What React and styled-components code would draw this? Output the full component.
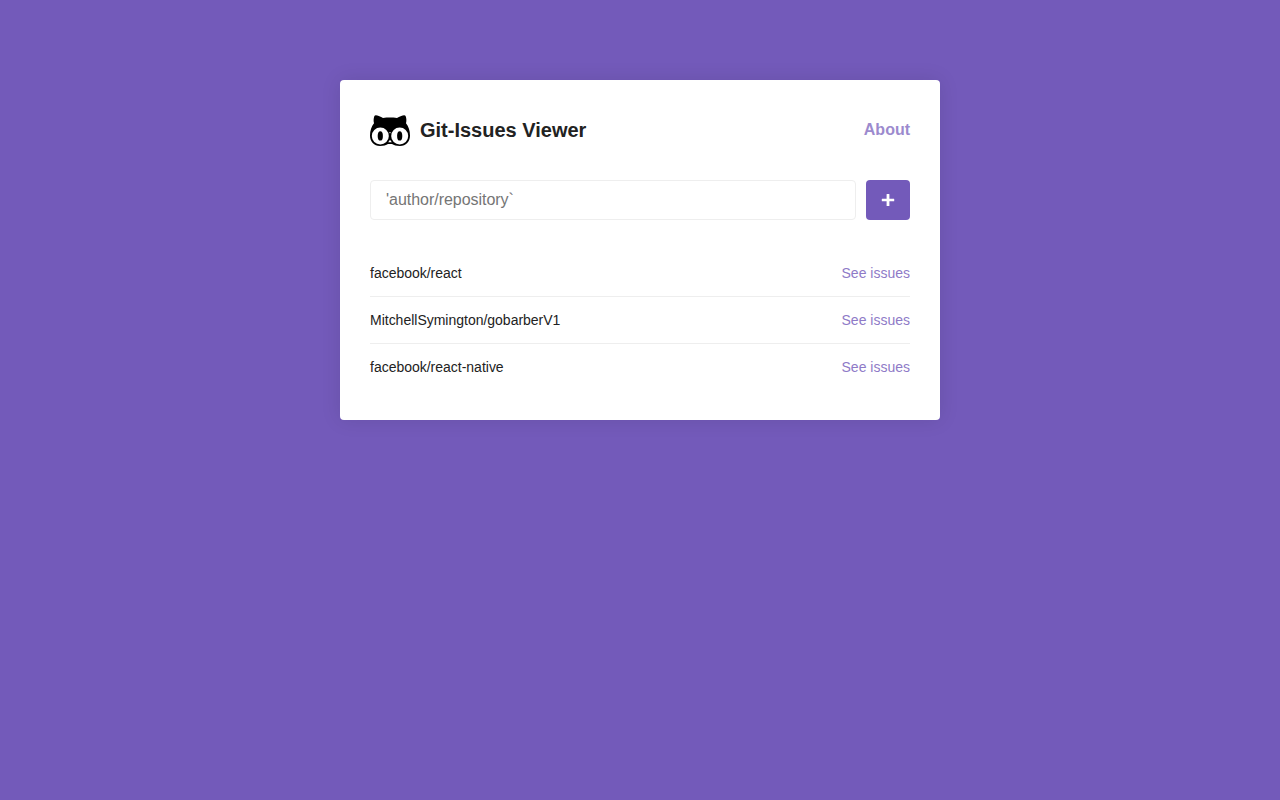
import React from "react";
import styled, { createGlobalStyle } from "styled-components";

const GlobalStyle = createGlobalStyle`
  * { margin: 0; padding: 0; box-sizing: border-box; }
  html, body, #root { min-height: 100%; }
  body {
    background: #735aba;
    -webkit-font-smoothing: antialiased;
  }
  body, input, button {
    color: #222;
    font-size: 14px;
    font-family: Arial, "Liberation Sans", Helvetica, sans-serif;
  }
`;

const Container = styled.main`
  width: 600px;
  margin: 80px auto;
  padding: 30px;
  background: #fff;
  border-radius: 4px;
  box-shadow: 0 0 20px rgba(0, 0, 0, 0.1);
`;

const Header = styled.header`
  display: flex;
  align-items: center;
  justify-content: space-between;
  height: 40px;
`;

const Title = styled.h1`
  display: flex;
  align-items: center;
  font-size: 20px;
  line-height: 40px;

  svg {
    margin-right: 10px;
  }
`;

const AboutLink = styled.a`
  color: #735aba;
  opacity: 0.7;
  font-size: 16px;
  font-weight: bold;
  line-height: 18px;
  padding-bottom: 1px;
  text-decoration: none;
`;

const Form = styled.form`
  display: flex;
  height: 40px;
  margin-top: 30px;
`;

const Input = styled.input`
  flex: 1;
  border: 1px solid #eee;
  border-radius: 4px;
  padding: 10px 15px;
  font-size: 16px;
  letter-spacing: -0.03px;

  &::placeholder {
    color: #757575;
  }
`;

const SubmitButton = styled.button`
  display: flex;
  align-items: center;
  justify-content: center;
  width: 44px;
  margin-left: 10px;
  border: 0;
  border-radius: 4px;
  background: #735aba;
`;

const List = styled.ul`
  margin-top: 30px;
  list-style: none;
`;

const Repository = styled.li`
  display: flex;
  align-items: center;
  justify-content: space-between;
  padding: 15px 0;
  line-height: 16px;

  & + & {
    border-top: 1px solid #eee;
  }
`;

const RepositoryName = styled.span`
  letter-spacing: -0.01px;
`;

const IssuesLink = styled.a`
  color: #735aba;
  opacity: 0.8;
  text-decoration: none;
`;

const repositories = ["facebook/react", "MitchellSymington/gobarberV1", "facebook/react-native"];

function CatLogo() {
  return (
    <svg width="40" height="40" viewBox="0 0 40 40" aria-hidden="true">
      <path
        fill="#000"
        d="M4.3 6.200C4.800 4.800 6.800 5.200 8.800 6c1.700.6 3.100 1.300 4.200 1.900 4.600-.5 9.400-.5 14 0 1.100-.6 2.500-1.300 4.200-1.900 2-.8 4-1.200 4.500.2.800 2.400.9 4.800.3 7.100C38.500 16.400 40 20.800 40 25.800C40 31.500 36 36 30 36C26.400 36 23.800 35.300 22 34H18C16.200 35.300 13.600 36 10 36C4 36 0 31.500 0 25.800C0 20.800 1.500 16.400 4 13.300C3.400 11 3.500 8.600 4.300 6.200Z"
      />
      <circle cx="10.300" cy="25.900" r="8.500" fill="#fff" />
      <circle cx="29.700" cy="25.900" r="8.500" fill="#fff" />
      <ellipse cx="10.300" cy="25.900" rx="2.600" ry="4.700" fill="#000" />
      <ellipse cx="29.700" cy="25.900" rx="2.600" ry="4.700" fill="#000" />
      <path d="M20 29.800l1.800 2.500h-3.600z" fill="#fff" />
      <path d="M19 22.200h2l-1 1.400z" fill="#fff" />
    </svg>
  );
}

function PlusIcon() {
  return (
    <svg width="14" height="14" viewBox="0 0 14 14" aria-hidden="true">
      <path
        fill="#fff"
        d="M5.900.9h2.200q.3 0 .3.300v4.500h4.500q.3 0 .3.300v2q0 .3-.3.300H8.400v4.500q0 .3-.3.300H5.900q-.3 0-.3-.3V8.300H1.100q-.3 0-.3-.3V6q0-.3.300-.3h4.500V1.200q0-.3.300-.3z"
      />
    </svg>
  );
}

export default function App() {
  return (
    <>
      <GlobalStyle />
      <Container>
        <Header>
          <Title>
            <CatLogo />
            Git-Issues Viewer
          </Title>
          <AboutLink>About</AboutLink>
        </Header>
        <Form>
          <Input type="text" placeholder="'author/repository`" />
          <SubmitButton type="button" aria-label="Add repository">
            <PlusIcon />
          </SubmitButton>
        </Form>
        <List>
          {repositories.map((name) => (
            <Repository key={name}>
              <RepositoryName>{name}</RepositoryName>
              <IssuesLink>See issues</IssuesLink>
            </Repository>
          ))}
        </List>
      </Container>
    </>
  );
}
